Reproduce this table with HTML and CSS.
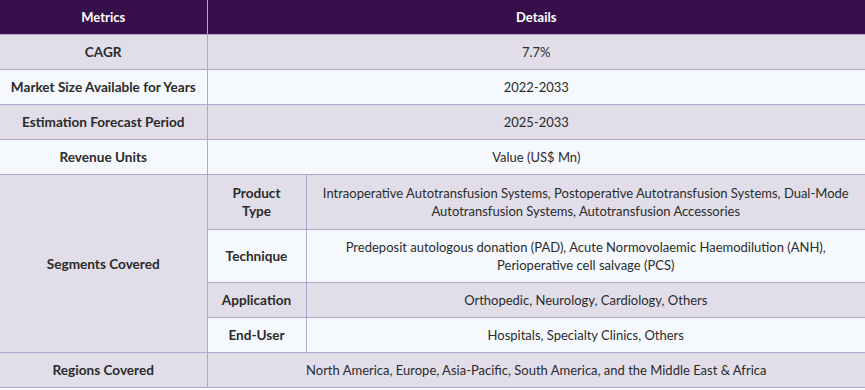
FILE: index.html
```html
<!DOCTYPE html>
<html>
<head>
<meta charset="utf-8">
<link rel="stylesheet" href="styles.css">
</head>
<body>
<table class="report">
  <colgroup>
    <col class="c1">
    <col class="c2">
    <col class="c3">
  </colgroup>
  <thead>
    <tr><th>Metrics</th><th colspan="2">Details</th></tr>
  </thead>
  <tbody>
    <tr class="dark"><td class="label">CAGR</td><td colspan="2">7.7%</td></tr>
    <tr class="light"><td class="label">Market Size Available for Years</td><td colspan="2">2022-2033</td></tr>
    <tr class="dark"><td class="label">Estimation Forecast Period</td><td colspan="2">2025-2033</td></tr>
    <tr class="light"><td class="label">Revenue Units</td><td colspan="2">Value (US$ Mn)</td></tr>
    <tr class="dark tall"><td class="label seg" rowspan="4">Segments Covered</td><td class="label">Product<br>Type</td><td>Intraoperative Autotransfusion Systems, Postoperative Autotransfusion Systems, Dual-Mode Autotransfusion Systems, Autotransfusion Accessories</td></tr>
    <tr class="light"><td class="label">Technique</td><td>Predeposit autologous donation (PAD), Acute Normovolaemic Haemodilution (ANH),<br>Perioperative cell salvage (PCS)</td></tr>
    <tr class="dark"><td class="label">Application</td><td>Orthopedic, Neurology, Cardiology, Others</td></tr>
    <tr class="light"><td class="label">End-User</td><td>Hospitals, Specialty Clinics, Others</td></tr>
    <tr class="dark"><td class="label">Regions Covered</td><td colspan="2">North America, Europe, Asia-Pacific, South America, and the Middle East &amp; Africa</td></tr>
  </tbody>
</table>
</body>
</html>
```
FILE: styles.css
```css
html, body {
  margin: 0;
  padding: 0;
  background: #ffffff;
}
.report {
  width: 865px;
  border-collapse: collapse;
  table-layout: fixed;
  font-family: Lato, "Liberation Sans", sans-serif;
  font-size: 13px;
  color: #2b2b2b;
}
.c1 { width: 207px; }
.c2 { width: 99px; }
.report th {
  background: #360f4b;
  color: #ffffff;
  font-weight: 700;
  font-size: 13px;
  height: 34px;
  padding: 0 8px;
  text-align: center;
  border-left: 1px solid #b3a6cc;
  border-bottom: 1px solid #b3a6cc;
}
.report th:first-child { border-left: none; }
.report td {
  padding: 8px 8px;
  line-height: 18px;
  text-align: center;
  vertical-align: middle;
  border: 1px solid #b3a6cc;
  border-top: none;
}
.report td:first-child { border-left: none; }
.report td:last-child { border-right: none; }
.report td.label {
  font-weight: 700;
  font-size: 13.6px;
  padding-left: 4px;
  padding-right: 4px;
}
.report td.seg { background: #e1deea; }
.dark td { background: #e1deea; }
.light td { background: #f5f9fd; }
.light td.seg { background: #e1deea; }
.tall td { padding-top: 9px; padding-bottom: 9px; }
```
